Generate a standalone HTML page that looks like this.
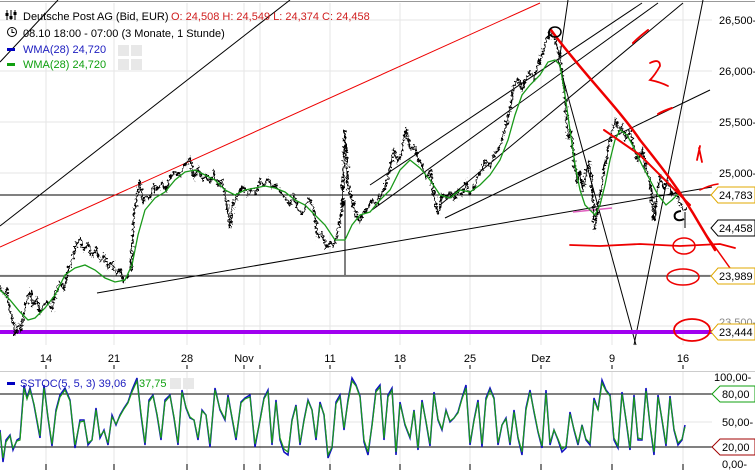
<!DOCTYPE html>
<html><head><meta charset="utf-8"><style>
body{margin:0;background:#fff;width:755px;height:470px;overflow:hidden;font-family:"Liberation Sans",sans-serif}
svg{display:block}
text{font-family:"Liberation Sans",sans-serif;font-size:11px}
</style></head><body>
<svg width="755" height="470" viewBox="0 0 755 470" xmlns="http://www.w3.org/2000/svg">
<defs>
<filter id="jit" x="-5%" y="-20%" width="110%" height="140%">
<feTurbulence type="fractalNoise" baseFrequency="0.35 0.35" numOctaves="2" seed="3" result="n"/>
<feDisplacementMap in="SourceGraphic" in2="n" scale="7" xChannelSelector="R" yChannelSelector="G"/>
</filter>
</defs>
<rect width="755" height="470" fill="#fff"/>
<line x1="0" y1="1.5" x2="755" y2="1.5" stroke="#999"/>
<!-- grid -->
<g stroke="#e6e6e6" stroke-width="1">
<line x1="46" y1="3" x2="46" y2="345"/><line x1="114" y1="3" x2="114" y2="345"/><line x1="187" y1="3" x2="187" y2="345"/><line x1="244" y1="3" x2="244" y2="345"/><line x1="260" y1="3" x2="260" y2="345"/><line x1="330" y1="3" x2="330" y2="345"/><line x1="400" y1="3" x2="400" y2="345"/><line x1="470" y1="3" x2="470" y2="345"/><line x1="541" y1="3" x2="541" y2="345"/><line x1="612" y1="3" x2="612" y2="345"/><line x1="683" y1="3" x2="683" y2="345"/>
<line x1="0" y1="20" x2="712" y2="20"/><line x1="0" y1="71" x2="712" y2="71"/><line x1="0" y1="122" x2="712" y2="122"/><line x1="0" y1="173" x2="712" y2="173"/><line x1="0" y1="224" x2="712" y2="224"/><line x1="0" y1="275" x2="712" y2="275"/><line x1="0" y1="326" x2="712" y2="326"/>
<line x1="46" y1="372" x2="46" y2="470"/><line x1="114" y1="372" x2="114" y2="470"/><line x1="187" y1="372" x2="187" y2="470"/><line x1="244" y1="372" x2="244" y2="470"/><line x1="260" y1="372" x2="260" y2="470"/><line x1="330" y1="372" x2="330" y2="470"/><line x1="400" y1="372" x2="400" y2="470"/><line x1="470" y1="372" x2="470" y2="470"/><line x1="541" y1="372" x2="541" y2="470"/><line x1="612" y1="372" x2="612" y2="470"/><line x1="683" y1="372" x2="683" y2="470"/>
<line x1="0" y1="422" x2="712" y2="422"/>
</g>
<!-- trend lines -->
<g stroke="#000" stroke-width="1" fill="none">
<line x1="0" y1="226" x2="290" y2="0"/>
<line x1="0" y1="62" x2="58" y2="0"/>
<line x1="370" y1="185" x2="642" y2="3"/>
<line x1="372" y1="210" x2="658" y2="3"/>
<line x1="440" y1="205" x2="683" y2="3"/>
<line x1="445" y1="218" x2="710" y2="90"/>
<line x1="97" y1="293" x2="712" y2="187"/>
<line x1="634" y1="345" x2="703" y2="0"/>
<line x1="558" y1="60" x2="636" y2="345"/>
<line x1="568" y1="0" x2="560" y2="55"/>
<line x1="0" y1="195" x2="712" y2="195"/>
<line x1="0" y1="276" x2="712" y2="276"/>
<line x1="345" y1="200" x2="345" y2="275"/>
<line x1="685" y1="212" x2="685" y2="228"/>
</g>
<line x1="0" y1="247" x2="540" y2="3" stroke="#e00" stroke-width="1"/>
<line x1="0" y1="332" x2="712" y2="332" stroke="#a000f0" stroke-width="4"/>
<line x1="573" y1="212" x2="612" y2="208" stroke="#e060c0" stroke-width="1.5"/>
<!-- price -->
<polyline filter="url(#jit)" fill="none" stroke="#000" stroke-width="1.6" points="0,285 4,295 7,290 10,312 13,320 15,336 18,325 21,330 23,318 27,300 30,290 33,305 37,298 40,312 44,305 48,302 52,310 55,295 60,282 64,290 68,270 72,262 76,245 80,238 84,250 88,243 92,256 96,248 100,262 104,255 108,268 112,262 116,275 120,270 124,282 128,276 131,268 134,215 137,195 140,180 143,203 146,196 150,200 154,185 158,190 162,182 166,190 170,178 175,172 180,175 185,165 190,158 194,178 198,168 202,180 206,175 210,182 214,172 218,186 222,180 226,198 230,228 233,205 236,198 240,190 244,186 248,195 252,188 256,194 260,180 264,186 268,178 272,188 276,184 280,192 285,198 290,205 294,195 298,210 302,214 306,205 310,198 314,210 318,238 322,232 326,248 330,242 334,246 338,230 342,210 345,130 348,185 352,200 356,215 360,222 364,212 368,208 372,200 376,205 380,195 385,188 390,168 394,150 398,162 402,150 406,128 410,150 414,145 418,158 422,165 426,178 430,170 434,195 438,215 442,195 446,198 450,192 454,200 458,190 462,196 466,182 470,195 474,188 478,175 482,170 486,160 490,168 494,155 498,150 502,140 506,125 510,110 514,85 518,78 522,90 526,80 530,72 534,80 538,65 542,55 546,42 550,30 554,38 558,48 562,70 565,95 568,140 571,130 574,160 577,185 580,170 583,192 586,175 589,160 592,185 595,230 598,205 601,190 604,170 607,155 610,140 613,128 616,120 619,132 622,125 626,140 630,130 634,150 638,160 642,150 646,172 650,178 654,220 657,195 660,175 664,190 668,182 672,196 676,190 680,205 685,210"/>
<!-- WMA -->
<polyline fill="none" stroke="#1a9a1a" stroke-width="1.3" points="0,290 10,300 20,312 28,320 35,318 45,308 55,295 65,275 75,268 85,265 95,270 105,278 115,282 125,280 132,265 138,235 145,210 155,198 165,192 175,180 185,172 195,170 205,175 215,180 225,190 235,195 245,190 255,188 265,186 275,188 285,192 295,200 305,205 315,215 325,225 335,240 345,240 352,225 360,215 370,212 380,200 390,190 400,170 410,160 420,168 430,180 440,195 450,198 460,190 470,192 480,185 490,175 500,160 508,140 515,115 522,95 530,85 540,75 548,62 555,60 560,65 565,95 570,130 575,165 580,190 585,205 590,210 595,215 600,205 605,185 610,160 615,140 620,130 627,135 635,150 642,165 650,180 658,195 666,205 672,200 680,192"/>
<!-- red drawings -->
<g fill="none" stroke="#e00" stroke-linecap="round">
<path d="M551,30 C580,70 620,110 640,140 C660,165 680,190 700,225 L715,250" stroke-width="2.5"/>
<path d="M604,130 L640,155 L670,185 L690,205" stroke-width="2"/>
<path d="M570,245 L600,246 L640,244 L680,246 L720,244 L735,248" stroke-width="1.8"/>
<path d="M705,233 L730,268" stroke-width="1.5"/>
<ellipse cx="684" cy="246" rx="11" ry="8" stroke-width="1.5"/>
<ellipse cx="683" cy="277" rx="16" ry="8" stroke-width="1.5"/>
<ellipse cx="692" cy="330" rx="18" ry="11" stroke-width="1.8"/>
<path d="M700,190 Q710,185 718,184" stroke-width="1.5"/>
<path d="M697,160 L700,146 M699,148 L702,162" stroke-width="1.8"/>
<path d="M650,63 Q660,58 660,66 Q655,75 650,80 Q660,82 668,86" stroke-width="1.8"/>
<path d="M633,43 Q640,36 648,30" stroke-width="2"/>
<path d="M658,114 Q663,111 672,108" stroke-width="2"/>
</g>
<ellipse cx="555" cy="32" rx="6" ry="5" fill="none" stroke="#000" stroke-width="1.5"/>
<path d="M681,211 Q673,212 675,218 Q678,222 684,219" fill="none" stroke="#000" stroke-width="2"/>
<!-- header -->
<g>
<path d="M7,10v10M11,10v10M15,10v10" stroke="#000" stroke-width="1"/><rect x="5.5" y="13" width="3" height="3" fill="#000"/><rect x="9.5" y="16" width="3" height="3" fill="#000"/><rect x="13.5" y="12" width="3" height="3" fill="#000"/>
<text x="23" y="20" fill="#000">Deutsche Post AG (Bid, EUR)</text>
<text x="171" y="20" fill="#d02020">O: 24,508  H: 24,549  L: 24,374  C: 24,458</text>
<circle cx="12" cy="32" r="4.5" fill="none" stroke="#000"/><path d="M12,29v3.5h2.5" stroke="#000" fill="none"/>
<text x="23" y="37" fill="#000">08.10 18:00 - 07:00 (3 Monate, 1 Stunde)</text>
<rect x="7" y="48" width="8" height="3" fill="#0000c0"/>
<text x="23" y="53" fill="#2020c0">WMA(28)  24,720</text>
<rect x="118" y="45" width="11" height="11" fill="#e8e8e8"/><rect x="131" y="45" width="11" height="11" fill="#e8e8e8"/>
<rect x="7" y="63" width="8" height="3" fill="#10a010"/>
<text x="23" y="68" fill="#10a010">WMA(28)  24,720</text>
<rect x="118" y="59" width="11" height="11" fill="#e8e8e8"/><rect x="131" y="59" width="11" height="11" fill="#e8e8e8"/>
</g>
<!-- right axis -->
<g fill="#000">
<text x="719" y="24">26,500-</text>
<text x="719" y="75">26,000-</text>
<text x="719" y="126">25,500-</text>
<text x="719" y="177">25,000-</text>
<text x="719" y="326" fill="#888">23,500-</text>
</g>
<g stroke-width="1" fill="#fff">
<path d="M718,187 H755 V203 H718 L711,195 Z" stroke="#e0a800"/>
<path d="M718,220 H755 V236 H718 L711,228 Z" stroke="#000"/>
<path d="M718,268 H755 V284 H718 L711,276 Z" stroke="#e0a800"/>
<path d="M718,324 H755 V340 H718 L711,332 Z" stroke="#e0a800"/>
</g>
<text x="719" y="199">24,783</text>
<text x="719" y="232">24,458</text>
<text x="719" y="280">23,989</text>
<text x="719" y="336">23,444</text>
<!-- dates -->
<g fill="#000" text-anchor="middle">
<text x="46" y="362">14</text><text x="114" y="362">21</text><text x="187" y="362">28</text><text x="244" y="362">Nov</text><text x="330" y="362">11</text><text x="400" y="362">18</text><text x="470" y="362">25</text><text x="541" y="362">Dez</text><text x="612" y="362">9</text><text x="683" y="362">16</text>
</g>
<g stroke="#000"><line x1="46" y1="365" x2="46" y2="369"/><line x1="114" y1="365" x2="114" y2="369"/><line x1="187" y1="365" x2="187" y2="369"/><line x1="244" y1="365" x2="244" y2="369"/><line x1="260" y1="365" x2="260" y2="369"/><line x1="330" y1="365" x2="330" y2="369"/><line x1="400" y1="365" x2="400" y2="369"/><line x1="470" y1="365" x2="470" y2="369"/><line x1="541" y1="365" x2="541" y2="369"/><line x1="612" y1="365" x2="612" y2="369"/><line x1="683" y1="365" x2="683" y2="369"/>
<line x1="46" y1="464" x2="46" y2="470"/><line x1="114" y1="464" x2="114" y2="470"/><line x1="187" y1="464" x2="187" y2="470"/><line x1="244" y1="464" x2="244" y2="470"/><line x1="260" y1="464" x2="260" y2="470"/><line x1="330" y1="464" x2="330" y2="470"/><line x1="400" y1="464" x2="400" y2="470"/><line x1="470" y1="464" x2="470" y2="470"/><line x1="541" y1="464" x2="541" y2="470"/><line x1="612" y1="464" x2="612" y2="470"/><line x1="683" y1="464" x2="683" y2="470"/></g>
<line x1="0" y1="371.5" x2="755" y2="371.5" stroke="#ccc"/>
<!-- stoch panel -->
<line x1="0" y1="394" x2="712" y2="394" stroke="#000"/>
<line x1="0" y1="447" x2="712" y2="447" stroke="#000"/>
<polyline fill="none" stroke="#1010c0" stroke-width="1.5" points="0,430 3,462 6,440 10,435 13,450 17,440 20,438 24,385 27,398 30,388 34,405 40,438 44,385 48,418 52,446 56,410 60,395 65,388 70,400 75,448 80,420 84,420 88,445 92,440 96,408 100,438 104,430 108,445 112,415 116,425 120,415 124,408 128,402 132,390 137,378 141,415 145,445 149,400 153,395 157,415 161,440 165,400 170,395 174,418 178,445 182,390 186,408 190,418 194,420 198,440 202,410 206,415 210,447 215,388 220,410 225,420 228,395 232,418 236,440 241,402 245,398 250,395 255,447 260,420 264,398 268,390 272,445 276,400 280,440 284,452 288,455 292,420 296,405 300,445 304,420 308,400 312,410 316,440 320,402 324,415 328,458 332,448 336,402 340,395 344,430 348,400 352,378 356,385 360,396 364,442 368,455 372,425 376,390 380,385 384,440 388,395 392,388 396,455 400,402 405,425 410,438 414,410 418,450 422,400 426,422 430,446 434,392 438,420 442,430 446,410 450,422 454,418 458,412 462,398 466,385 470,445 474,420 478,400 482,447 486,398 490,388 494,398 498,445 502,425 506,418 510,445 514,410 518,438 522,455 526,408 530,390 534,412 538,432 542,448 546,390 550,445 554,430 558,440 562,452 566,448 570,412 574,430 578,445 582,425 586,440 590,445 594,398 598,410 602,380 606,390 610,395 614,440 618,448 622,392 626,420 630,450 634,395 638,440 642,440 646,388 650,425 654,455 658,395 662,420 666,446 670,396 674,430 678,445 682,440 685,425"/>
<polyline fill="none" stroke="#1a9a1a" stroke-width="1.2" points="0,432 3,458 6,442 10,436 13,448 17,441 20,440 24,388 27,399 30,390 34,404 40,436 44,388 48,417 52,444 56,412 60,397 65,390 70,401 75,445 80,422 84,421 88,443 92,440 96,410 100,436 104,431 108,443 112,417 116,424 120,416 124,409 128,403 132,392 137,381 141,413 145,443 149,402 153,396 157,414 161,438 165,402 170,396 174,417 178,443 182,392 186,407 190,417 194,420 198,438 202,411 206,415 210,444 215,390 220,409 225,419 228,397 232,417 236,438 241,403 245,399 250,397 255,444 260,421 264,399 268,392 272,443 276,402 280,438 284,449 288,452 292,421 296,406 300,443 304,421 308,401 312,410 316,438 320,404 324,414 328,455 332,447 336,404 340,397 344,428 348,402 352,381 356,386 360,397 364,440 368,452 372,426 376,392 380,387 384,438 388,397 392,390 396,452 400,404 405,424 410,437 414,411 418,448 422,402 426,421 430,444 434,394 438,419 442,429 446,411 450,421 454,418 458,413 462,399 466,388 470,443 474,421 478,402 482,444 486,400 490,390 494,399 498,443 502,425 506,419 510,443 514,412 518,437 522,452 526,410 530,392 534,411 538,431 542,446 546,393 550,443 554,430 558,439 562,449 566,446 570,414 574,429 578,443 582,426 586,439 590,443 594,400 598,410 602,383 606,391 610,396 614,438 618,446 622,394 626,419 630,448 634,397 638,438 642,439 646,391 650,424 654,452 658,397 662,419 666,444 670,398 674,429 678,443 682,439 685,427"/>
<rect x="7" y="382" width="8" height="3" fill="#0000c0"/>
<text x="20" y="387" fill="#2020c0">SSTOC(5, 5, 3)  39,06</text>
<text x="139" y="387" fill="#10a010">37,75</text>
<rect x="170" y="378" width="11" height="11" fill="#e8e8e8"/><rect x="183" y="378" width="11" height="11" fill="#e8e8e8"/>
<text x="714" y="381">100,00-</text>
<path d="M720,386 H755 V402 H720 L712,394 Z" fill="#fff" stroke="#10a010"/>
<text x="722" y="398">80,00</text>
<text x="722" y="426">50,00-</text>
<path d="M720,439 H755 V455 H720 L712,447 Z" fill="#fff" stroke="#a00000"/>
<text x="722" y="451">20,00</text>
<text x="722" y="468">0,00-</text>
</svg>
</body></html>
